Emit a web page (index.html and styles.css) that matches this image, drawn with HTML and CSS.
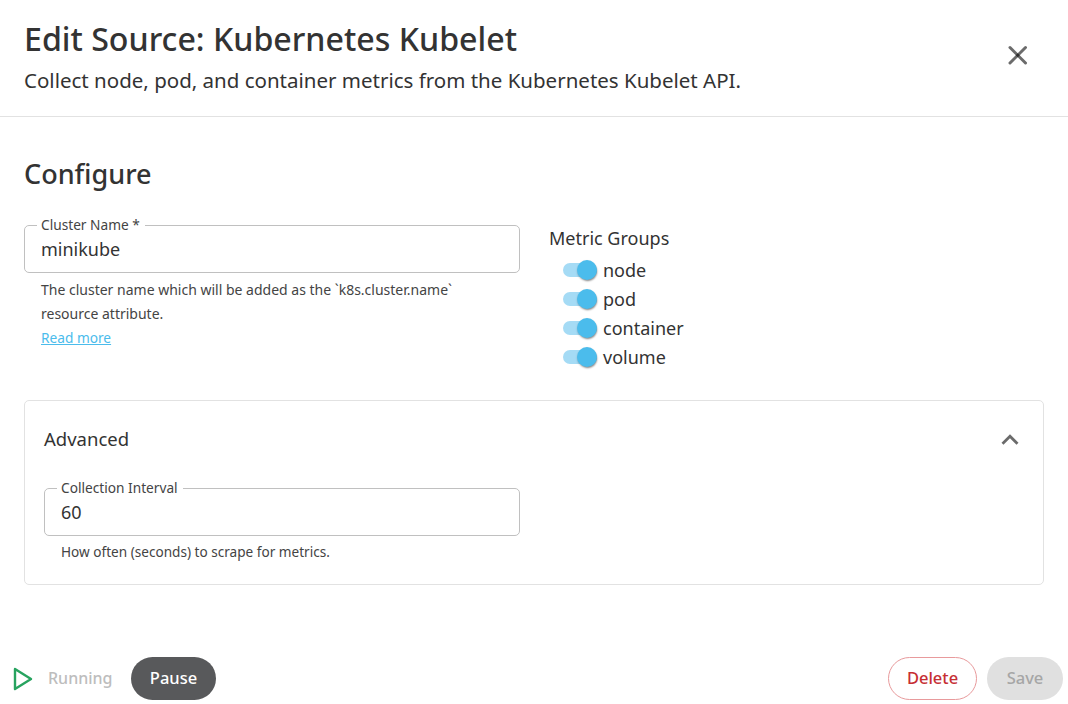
FILE: index.html
```html
<!DOCTYPE html>
<html lang="en">
<head>
<meta charset="utf-8">
<title>Edit Source: Kubernetes Kubelet</title>
<link rel="stylesheet" href="styles.css">
</head>
<body>
<div class="dialog">
  <header class="head">
    <div class="head-text">
      <h1 class="title">Edit Source: Kubernetes Kubelet</h1>
      <p class="subtitle">Collect node, pod, and container metrics from the Kubernetes Kubelet API.</p>
    </div>
    <button class="close" aria-label="Close">
      <svg viewBox="0 0 30 30" width="30" height="30"><g stroke="#000" stroke-opacity=".58" stroke-width="3" stroke-linecap="round"><path d="M7 6.5 22.5 22"/><path d="M22.5 6.5 7 22"/></g></svg>
    </button>
  </header>
  <main class="body">
    <h2 class="section">Configure</h2>
    <div class="columns">
      <div class="col-field">
        <fieldset class="field">
          <legend class="legend">Cluster Name *</legend>
          <span class="value">minikube</span>
        </fieldset>
        <p class="help">The cluster name which will be added as the `k8s.cluster.name` resource attribute.</p>
        <a class="more" href="#">Read more</a>
      </div>
      <div class="col-groups">
        <div class="group-label">Metric Groups</div>
        <ul class="switches">
          <li class="sw-row"><span class="switch"><span class="knob"></span></span>node</li>
          <li class="sw-row"><span class="switch"><span class="knob"></span></span>pod</li>
          <li class="sw-row"><span class="switch"><span class="knob"></span></span>container</li>
          <li class="sw-row"><span class="switch"><span class="knob"></span></span>volume</li>
        </ul>
      </div>
    </div>
    <section class="card">
      <div class="card-head">
        <span class="card-title">Advanced</span>
        <svg class="chevron" viewBox="0 0 24 24" width="34" height="34"><path fill="#6b6b6b" d="M12 8 6 14l1.41 1.41L12 10.83l4.59 4.58L18 14z"/></svg>
      </div>
      <div class="card-field">
        <fieldset class="field">
          <legend class="legend">Collection Interval</legend>
          <span class="value">60</span>
        </fieldset>
        <p class="help tight">How often (seconds) to scrape for metrics.</p>
      </div>
    </section>
  </main>
  <footer class="foot">
    <div class="foot-group">
      <svg class="play" viewBox="0 0 20 24" width="20" height="24"><path fill="none" stroke="#27a35f" stroke-width="2.4" stroke-linejoin="round" d="M2 2 18 12 2 22z"/></svg>
      <span class="status">Running</span>
      <button class="btn pause">Pause</button>
    </div>
    <div class="foot-group right">
      <button class="btn delete">Delete</button>
      <button class="btn save">Save</button>
    </div>
  </footer>
</div>
</body>
</html>
```
FILE: styles.css
```css
* { box-sizing: border-box; }
html, body { margin: 0; padding: 0; background: #fff; }
body {
  font-family: "Noto Sans", "Open Sans", sans-serif;
  color: #333;
}
.dialog {
  width: 1068px;
  height: 704px;
  display: flex;
  flex-direction: column;
  overflow: hidden;
}
.head {
  height: 117px;
  border-bottom: 1px solid #e2e2e2;
  display: flex;
  justify-content: space-between;
  padding: 16px 35px 0 24px;
}
.title {
  margin: 0;
  font-size: 32.15px;
  line-height: 46px;
  font-weight: 500;
}
.subtitle {
  margin: 0;
  font-size: 20.5px;
  line-height: 36px;
  font-weight: 400;
}
.close {
  width: 30px;
  height: 30px;
  margin-top: 25px;
  padding: 0;
  border: 0;
  background: none;
}
.body {
  flex: 1;
  padding: 37px 24px 0;
}
.section {
  margin: 0;
  font-size: 27px;
  line-height: 40px;
  font-weight: 500;
}
.columns {
  display: flex;
  margin-top: 23px;
  height: 165px;
}
.col-field { width: 496px; }
.field {
  margin: -1px 0 0;
  height: 57px;
  padding: 0 16px;
  border: 1px solid #c0c0c0;
  border-radius: 5px;
  min-width: 0;
}
.legend {
  padding: 0 5px 0 4px;
  margin-left: -4px;
  font-size: 13.7px;
  line-height: 18px;
  color: #444;
}
.value {
  display: block;
  font-size: 18px;
  line-height: 30px;
}
.help {
  margin: 5px 0 0;
  padding: 0 40px 0 17px;
  font-size: 14px;
  line-height: 24px;
  color: #444;
}
.help.tight { margin-top: 4px; font-size: 13.6px; }
.more {
  display: block;
  margin-left: 17px;
  font-size: 13.7px;
  line-height: 24px;
  color: #4bbcec;
}
.col-groups {
  margin-left: 29px;
  padding-top: 7px;
}
.group-label {
  font-size: 18px;
  line-height: 28px;
}
.switches {
  list-style: none;
  margin: 4px 0 0;
  padding: 0 0 0 14px;
}
.sw-row {
  display: flex;
  align-items: center;
  height: 28.75px;
  font-size: 18px;
}
.switch {
  position: relative;
  width: 34px;
  height: 14px;
  margin-right: 6px;
  border-radius: 7px;
  background: #a5dbf5;
}
.knob {
  position: absolute;
  right: 0;
  top: -3px;
  width: 20px;
  height: 20px;
  border-radius: 50%;
  background: #4bbcec;
  box-shadow: 1px 2px 2px -1px rgba(0,0,0,.35), 0 1px 2px rgba(0,0,0,.2);
}
.card {
  margin-top: 18px;
  height: 185px;
  border: 1px solid #e2e2e2;
  border-radius: 5px;
  padding: 0 16px 0 19px;
}
.card-head {
  height: 78px;
  display: flex;
  align-items: center;
  justify-content: space-between;
  font-size: 18.5px;
}
.card-title { margin-top: -4px; }
.card-field { width: 476px; }
.card-field .field { margin-top: 0; }
.foot {
  height: 47px;
  margin-bottom: 2px;
  display: flex;
  justify-content: space-between;
  padding: 0 5px 0 13px;
}
.foot-group {
  display: flex;
  align-items: center;
}
.play { margin-right: 15px; }
.status {
  width: 83px;
  padding-bottom: 2px;
  font-size: 16px;
  color: #bdbdbd;
  font-weight: 500;
}
.btn {
  height: 43px;
  border-radius: 22px;
  border: 1px solid transparent;
  font-family: inherit;
  font-size: 16.5px;
  font-weight: 500;
  padding: 0 0 2px;
}
.pause { width: 85px; background: #58595b; color: #fff; }
.delete { width: 89px; background: #fff; color: #c62f33; border-color: #e89a9c; }
.save { width: 76px; margin-left: 10px; background: #e0e0e0; color: #a6a6a6; }
```
